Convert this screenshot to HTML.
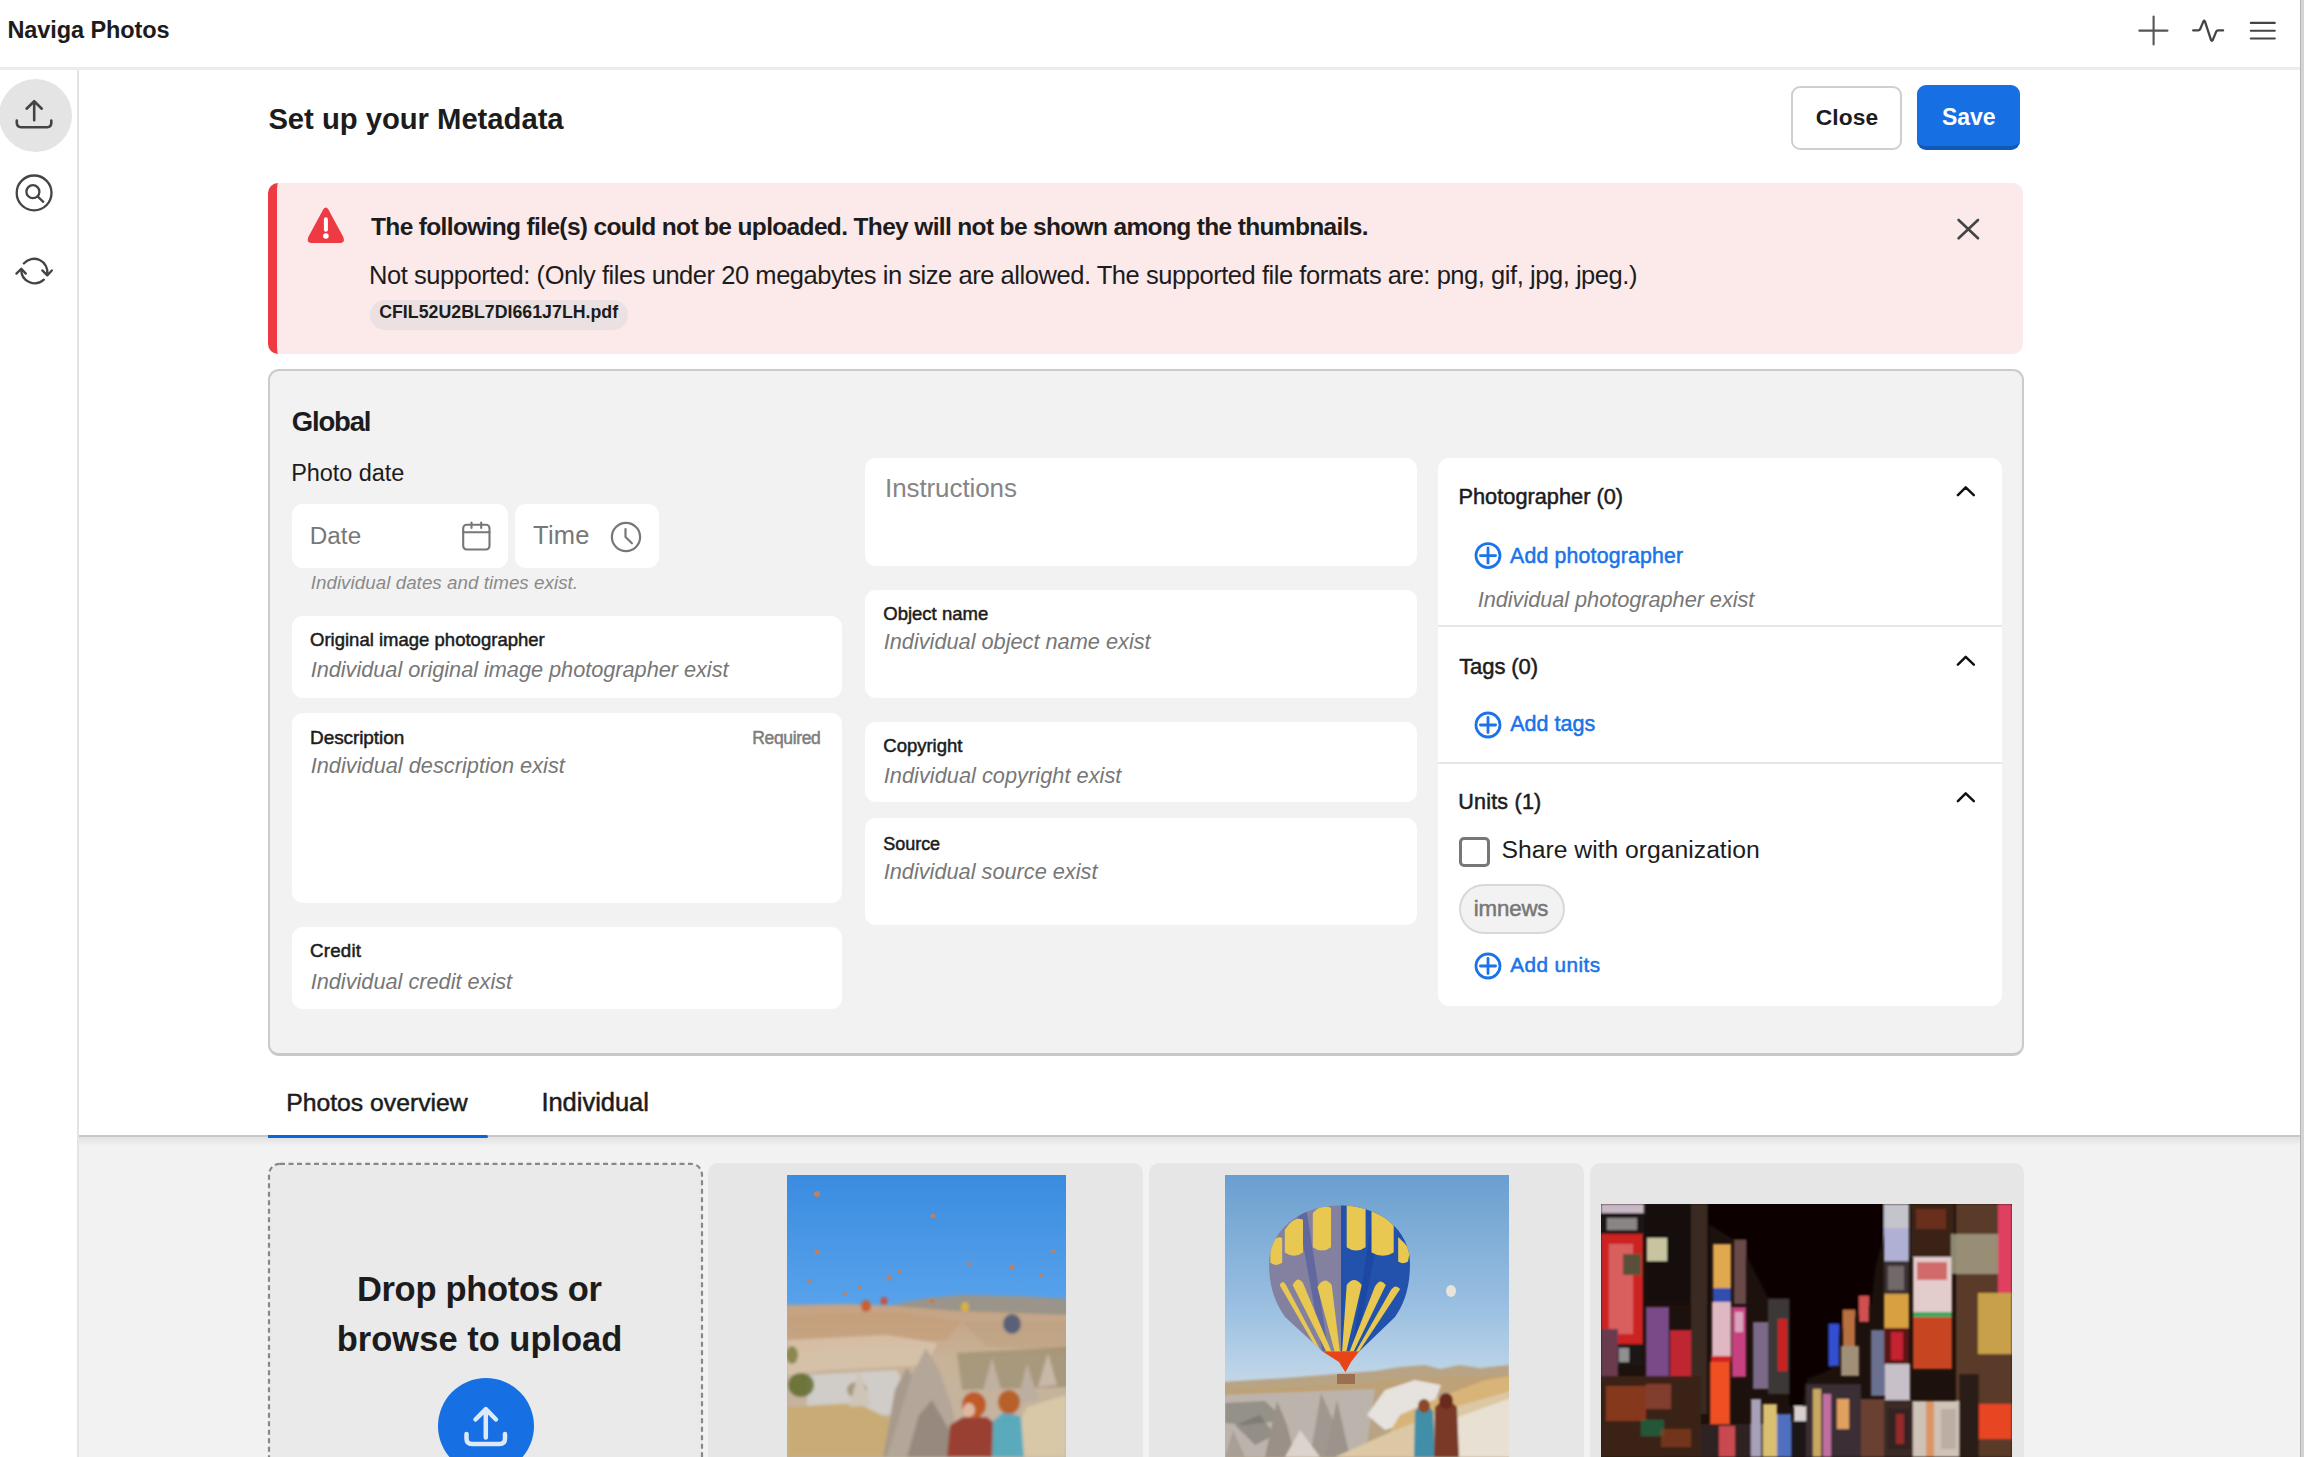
<!DOCTYPE html>
<html><head><meta charset="utf-8">
<style>
*{box-sizing:border-box;margin:0;padding:0}
html,body{width:2304px;height:1457px;overflow:hidden;background:#fff;font-family:"Liberation Sans",sans-serif;color:#1c1c1c}
.a{position:absolute}
.t{position:absolute;white-space:nowrap;line-height:1}
.box{position:absolute;background:#fff;border-radius:11px}
svg{position:absolute;overflow:visible}
</style></head><body>

<!-- header -->
<div class="t" style="left:7.4px;top:19.4px;font-size:23.5px;letter-spacing:-0.08px;font-weight:700;font-style:normal;color:#1c1c1c">Naviga Photos</div>
<div class="a" style="left:0;top:67px;width:2300px;height:3px;background:#ececec"></div>
<div class="a" style="left:2300px;top:0;width:4px;height:1457px;background:#d4d4d4;border-left:1px solid #b4b4b4"></div>

<!-- sidebar -->
<div class="a" style="left:77px;top:70px;width:2px;height:1387px;background:#e4e4e4"></div>
<div class="a" style="left:-1px;top:79px;width:73px;height:73px;border-radius:50%;background:#e4e4e4"></div>

<!-- title & buttons -->
<div class="t" style="left:268.4px;top:105.3px;font-size:29.25px;letter-spacing:-0.03px;font-weight:700;font-style:normal;color:#1c1c1c">Set up your Metadata</div>
<div class="a" style="left:1791px;top:86px;width:111px;height:64px;border:2px solid #cfcfcf;border-radius:9px;background:#fff"></div>
<div class="t" style="left:1815.7px;top:105.8px;font-size:22.75px;letter-spacing:0.15px;font-weight:700;font-style:normal;color:#1c1c1c">Close</div>
<div class="a" style="left:1917px;top:85px;width:103px;height:65px;border-radius:9px;background:#1670e4;border-bottom:4px solid #1158b8"></div>
<div class="t" style="left:1942.0px;top:105.6px;font-size:23.0px;letter-spacing:-0.07px;font-weight:700;font-style:normal;color:#fff">Save</div>

<!-- alert -->
<div class="a" style="left:268px;top:183px;width:1755px;height:171px;background:#fce9ea;border-radius:10px;border-left:9px solid #ee3a43"></div>
<div class="t" style="left:371.0px;top:215.1px;font-size:24.5px;letter-spacing:-0.65px;font-weight:700;font-style:normal;color:#1c1c1c">The following file(s) could not be uploaded. They will not be shown among the thumbnails.</div>
<div class="t" style="left:369.0px;top:262.5px;font-size:25.5px;letter-spacing:-0.45px;font-weight:400;font-style:normal;color:#1c1c1c">Not supported: (Only files under 20 megabytes in size are allowed. The supported file formats are: png, gif, jpg, jpeg.)</div>
<div class="a" style="left:370px;top:300px;width:258px;height:30px;border-radius:15px;background:#ebe1e2"></div>
<div class="t" style="left:379.2px;top:304.1px;font-size:17.75px;letter-spacing:0.01px;font-weight:700;font-style:normal;color:#1c1c1c">CFIL52U2BL7DI661J7LH.pdf</div>

<!-- global panel -->
<div class="a" style="left:268px;top:369px;width:1756px;height:687px;background:#f2f2f2;border:2px solid #cbcbcb;border-bottom:3.5px solid #c8c8c8;border-radius:11px"></div>
<div class="t" style="left:291.7px;top:408.0px;font-size:27.5px;letter-spacing:-1.16px;font-weight:700;font-style:normal;color:#1c1c1c">Global</div>
<div class="t" style="left:291.2px;top:462.2px;font-size:23.5px;letter-spacing:-0.07px;font-weight:400;font-style:normal;color:#1c1c1c">Photo date</div>

<div class="box" style="left:292px;top:504px;width:216px;height:64px"></div>
<div class="t" style="left:309.7px;top:523.5px;font-size:24.25px;letter-spacing:0.07px;font-weight:400;font-style:normal;color:#777">Date</div>
<div class="box" style="left:515px;top:504px;width:144px;height:64px"></div>
<div class="t" style="left:533.0px;top:522.5px;font-size:25.5px;letter-spacing:0.27px;font-weight:400;font-style:normal;color:#777">Time</div>
<div class="t" style="left:310.7px;top:574.4px;font-size:18.75px;letter-spacing:0.05px;font-weight:400;font-style:italic;color:#8a8a8a">Individual dates and times exist.</div>

<div class="box" style="left:292px;top:616px;width:550px;height:82px"></div>
<div class="t" style="left:310.0px;top:631.0px;font-size:18.5px;letter-spacing:0.01px;font-weight:400;-webkit-text-stroke:0.5px #1c1c1c;font-style:normal;color:#1c1c1c">Original image photographer</div>
<div class="t" style="left:310.7px;top:659.1px;font-size:21.75px;letter-spacing:-0.04px;font-weight:400;font-style:italic;color:#777">Individual original image photographer exist</div>

<div class="box" style="left:292px;top:713px;width:550px;height:190px"></div>
<div class="t" style="left:310.0px;top:728.2px;font-size:19.0px;letter-spacing:-0.08px;font-weight:400;-webkit-text-stroke:0.5px #1c1c1c;font-style:normal;color:#1c1c1c">Description</div>
<div class="t" style="left:752.3px;top:729.5px;font-size:17.5px;letter-spacing:-0.37px;font-weight:400;-webkit-text-stroke:0.5px #7d7d7d;font-style:normal;color:#7d7d7d">Required</div>
<div class="t" style="left:310.7px;top:754.8px;font-size:21.75px;letter-spacing:0.01px;font-weight:400;font-style:italic;color:#777">Individual description exist</div>

<div class="box" style="left:292px;top:927px;width:550px;height:82px"></div>
<div class="t" style="left:310.0px;top:942.0px;font-size:18.75px;letter-spacing:0.2px;font-weight:400;-webkit-text-stroke:0.5px #1c1c1c;font-style:normal;color:#1c1c1c">Credit</div>
<div class="t" style="left:310.7px;top:971.4px;font-size:21.75px;letter-spacing:-0.02px;font-weight:400;font-style:italic;color:#777">Individual credit exist</div>

<div class="box" style="left:865px;top:458px;width:552px;height:108px"></div>
<div class="t" style="left:885.0px;top:474.6px;font-size:26.0px;letter-spacing:-0.09px;font-weight:400;font-style:normal;color:#858585">Instructions</div>

<div class="box" style="left:865px;top:590px;width:552px;height:108px"></div>
<div class="t" style="left:883.3px;top:605.4px;font-size:18.5px;letter-spacing:0.0px;font-weight:400;-webkit-text-stroke:0.5px #1c1c1c;font-style:normal;color:#1c1c1c">Object name</div>
<div class="t" style="left:883.7px;top:631.0px;font-size:21.75px;letter-spacing:-0.01px;font-weight:400;font-style:italic;color:#777">Individual object name exist</div>

<div class="box" style="left:865px;top:722px;width:552px;height:80px"></div>
<div class="t" style="left:883.3px;top:736.8px;font-size:18.5px;letter-spacing:-0.02px;font-weight:400;-webkit-text-stroke:0.5px #1c1c1c;font-style:normal;color:#1c1c1c">Copyright</div>
<div class="t" style="left:883.7px;top:764.9px;font-size:21.75px;letter-spacing:0.03px;font-weight:400;font-style:italic;color:#777">Individual copyright exist</div>

<div class="box" style="left:865px;top:818px;width:552px;height:107px"></div>
<div class="t" style="left:883.3px;top:835.0px;font-size:18.0px;letter-spacing:-0.04px;font-weight:400;-webkit-text-stroke:0.5px #1c1c1c;font-style:normal;color:#1c1c1c">Source</div>
<div class="t" style="left:883.7px;top:861.0px;font-size:21.75px;letter-spacing:-0.01px;font-weight:400;font-style:italic;color:#777">Individual source exist</div>

<!-- right panel -->
<div class="box" style="left:1438px;top:458px;width:564px;height:548px"></div>
<div class="a" style="left:1438px;top:625px;width:564px;height:2px;background:#e6e6e6"></div>
<div class="a" style="left:1438px;top:762px;width:564px;height:2px;background:#e6e6e6"></div>

<div class="t" style="left:1458.5px;top:486.3px;font-size:21.75px;letter-spacing:0.01px;font-weight:400;-webkit-text-stroke:0.5px #1c1c1c;font-style:normal;color:#1c1c1c">Photographer (0)</div>
<div class="t" style="left:1510.1px;top:545.7px;font-size:21.25px;letter-spacing:0.19px;font-weight:400;-webkit-text-stroke:0.5px #1a73e8;font-style:normal;color:#1a73e8">Add photographer</div>
<div class="t" style="left:1477.7px;top:588.6px;font-size:21.75px;letter-spacing:-0.05px;font-weight:400;font-style:italic;color:#777">Individual photographer exist</div>

<div class="t" style="left:1459.2px;top:655.8px;font-size:22.0px;letter-spacing:-0.09px;font-weight:400;-webkit-text-stroke:0.5px #1c1c1c;font-style:normal;color:#1c1c1c">Tags (0)</div>
<div class="t" style="left:1510.2px;top:713.6px;font-size:21.5px;letter-spacing:0.03px;font-weight:400;-webkit-text-stroke:0.5px #1a73e8;font-style:normal;color:#1a73e8">Add tags</div>

<div class="t" style="left:1458.2px;top:792.4px;font-size:21.5px;letter-spacing:0.23px;font-weight:400;-webkit-text-stroke:0.5px #1c1c1c;font-style:normal;color:#1c1c1c">Units (1)</div>
<div class="a" style="left:1459px;top:837px;width:31px;height:30px;border:3px solid #777;border-radius:5px"></div>
<div class="t" style="left:1501.5px;top:837.7px;font-size:24.75px;letter-spacing:-0.02px;font-weight:400;font-style:normal;color:#1c1c1c">Share with organization</div>
<div class="a" style="left:1459px;top:884px;width:106px;height:50px;border-radius:25px;background:#f2f2f2;border:2px solid #d8d8d8"></div>
<div class="t" style="left:1473.8px;top:897.9px;font-size:22.25px;letter-spacing:-0.16px;font-weight:400;-webkit-text-stroke:0.5px #777;font-style:normal;color:#777">imnews</div>
<div class="t" style="left:1510.2px;top:955.3px;font-size:20.75px;letter-spacing:0.42px;font-weight:400;-webkit-text-stroke:0.5px #1a73e8;font-style:normal;color:#1a73e8">Add units</div>

<!-- tabs -->
<div class="t" style="left:286.2px;top:1090.9px;font-size:24.75px;letter-spacing:-0.01px;font-weight:400;-webkit-text-stroke:0.5px #1c1c1c;font-style:normal;color:#1c1c1c">Photos overview</div>
<div class="t" style="left:541.4px;top:1090.3px;font-size:25.5px;letter-spacing:-0.02px;font-weight:400;-webkit-text-stroke:0.5px #1c1c1c;font-style:normal;color:#1c1c1c">Individual</div>
<div class="a" style="left:79px;top:1135px;width:2221px;height:322px;background:#f2f2f2;border-top:2px solid #c8c8c8"></div>
<div class="a" style="left:79px;top:1137px;width:2221px;height:9px;background:linear-gradient(rgba(0,0,0,0.07),rgba(0,0,0,0))"></div>
<div class="a" style="left:268px;top:1135px;width:220px;height:2.5px;background:#0a66e0;border-radius:0 2px 2px 0"></div>

<!-- drop zone -->
<svg style="left:0;top:0" width="2304" height="1457" viewBox="0 0 2304 1457"><rect x="269" y="1163.8" width="433" height="340" rx="11" fill="#eaeaea" stroke="#888" stroke-width="2.2" stroke-dasharray="5 3.5"/></svg>
<div class="t" style="left:356.9px;top:1272.1px;font-size:34.5px;letter-spacing:-0.31px;font-weight:700;font-style:normal;color:#1c1c1c">Drop photos or</div>
<div class="t" style="left:336.8px;top:1321.8px;font-size:34.5px;letter-spacing:-0.0px;font-weight:700;font-style:normal;color:#1c1c1c">browse to upload</div>
<div class="a" style="left:438px;top:1378px;width:96px;height:96px;border-radius:50%;background:#1670e4"></div>

<!-- cards -->
<div class="a" style="left:708px;top:1163px;width:435px;height:320px;background:#e6e6e6;border-radius:10px"></div>
<div class="a" style="left:1149px;top:1163px;width:435px;height:320px;background:#e6e6e6;border-radius:10px"></div>
<div class="a" style="left:1590px;top:1163px;width:434px;height:320px;background:#e6e6e6;border-radius:10px"></div>

<div class="a" style="left:787px;top:1175px;width:279px;height:282px;overflow:hidden"><svg style="left:0;top:0" width="279" height="282" viewBox="0 0 279 282">
<defs>
<linearGradient id="s1" x1="0" y1="0" x2="0" y2="1"><stop offset="0" stop-color="#3a8ce0"/><stop offset="0.5" stop-color="#5ba4ec"/><stop offset="0.85" stop-color="#92bcec"/><stop offset="1" stop-color="#b0ccec"/></linearGradient>
<linearGradient id="t1" x1="0" y1="0" x2="0" y2="1"><stop offset="0" stop-color="#c4a282"/><stop offset="0.35" stop-color="#c8b298"/><stop offset="1" stop-color="#c0b4a4"/></linearGradient>
<filter id="bl1"><feGaussianBlur stdDeviation="1.4"/></filter>
</defs>
<rect width="279" height="282" fill="url(#s1)"/>
<g filter="url(#bl1)">
<path d="M95 132 L140 123 L175 120 L230 121 L284 124 L284 150 L95 140Z" fill="#9a948a"/>
<path d="M-5 130 L60 129 L110 131 L170 136 L284 140 L284 290 L-5 290Z" fill="url(#t1)"/>
<path d="M0 140 L110 137 L175 146 L160 165 L60 172 L0 178Z" fill="#c49a74" opacity="0.55"/>
<path d="M0 165 L100 160 L150 168 L140 190 L40 195 L0 200Z" fill="#d8c4ac" opacity="0.8"/>
<path d="M175 146 L284 146 L284 175 L200 172Z" fill="#bca080" opacity="0.6"/>
<path d="M170 178 L284 172 L284 212 L175 215Z" fill="#6e6a48" opacity="0.35"/>
<path d="M20 200 L110 195 L130 240 L20 240Z" fill="#d0ccc8"/>
<ellipse cx="14" cy="210" rx="13" ry="12" fill="#5e6a2a" opacity="0.85"/>
<ellipse cx="5" cy="180" rx="6" ry="9" fill="#6a7028" opacity="0.7"/>
<ellipse cx="70" cy="215" rx="10" ry="8" fill="#8a7a50" opacity="0.6"/>
<path d="M0 232 L70 228 L115 250 L125 282 L0 282Z" fill="#c9ac74"/>
<path d="M62 232 L72 196 L84 230Z" fill="#cfc4b8"/>
<path d="M96 282 L108 215 L120 192 L132 212 L150 282Z" fill="#a89a8c"/>
<path d="M100 282 L125 200 L139 173 L152 195 L166 235 L172 282Z" fill="#b4a698"/>
<path d="M120 282 L132 240 L145 225 L165 260 L168 282Z" fill="#8a7e74" opacity="0.7"/>
<path d="M196 216 L205 183 L214 214Z" fill="#c0b0a0"/>
<path d="M230 228 L240 188 L252 226Z" fill="#bcaea0"/>
<path d="M251 212 L261 178 L270 210Z" fill="#c8b8a8"/>
<path d="M214 282 L240 232 L279 220 L279 282Z" fill="#d8c8a8"/>
<path d="M160 282 L163 250 L176 242 L200 242 L212 252 L214 282Z" fill="#9a4030"/>
<ellipse cx="187" cy="230" rx="12" ry="13" fill="#c05a28"/>
<ellipse cx="182" cy="235" rx="6" ry="7" fill="#e0b8a0"/>
<path d="M205 282 L206 246 L218 236 L234 242 L237 282Z" fill="#5aaabb"/>
<ellipse cx="222" cy="227" rx="11" ry="12" fill="#b8602a"/>
<ellipse cx="225" cy="149" rx="9" ry="10" fill="#5a6078"/>
<ellipse cx="79" cy="131" rx="5" ry="6" fill="#c86030"/>
<ellipse cx="97" cy="126" rx="3.5" ry="4" fill="#c85040"/>
<ellipse cx="178" cy="132" rx="4" ry="5" fill="#d8b040"/>
</g>
<g fill="#c08060">
<circle cx="30" cy="19" r="3"/><circle cx="146" cy="41" r="2.5"/><circle cx="30" cy="77" r="2.5"/><circle cx="22" cy="106" r="2"/><circle cx="102" cy="103" r="2.5"/><circle cx="112" cy="97" r="2"/><circle cx="182" cy="89" r="2"/><circle cx="225" cy="92" r="2.5"/><circle cx="254" cy="100" r="2"/><circle cx="266" cy="76" r="2"/><circle cx="58" cy="119" r="2"/><circle cx="73" cy="112" r="2"/><circle cx="145" cy="126" r="2.5"/>
</g>
</svg>
</div>
<div class="a" style="left:1225px;top:1175px;width:284px;height:282px;overflow:hidden"><svg style="left:0;top:0" width="284" height="282" viewBox="0 0 284 282">
<defs>
<linearGradient id="s2" x1="0" y1="0" x2="0" y2="1"><stop offset="0" stop-color="#6a9fd0"/><stop offset="0.45" stop-color="#98bee0"/><stop offset="0.72" stop-color="#c0d6e8"/><stop offset="1" stop-color="#d8e0e4"/></linearGradient>
<clipPath id="env"><path d="M115.2 30.4C155 30.4 185 55 185 89C185 115 178 130 170 142L134.1 176.5L97.6 176.5L60 142C52 130 44.1 115 44.1 89C44.1 55 75 30.4 115.2 30.4Z"/></clipPath>
<filter id="bl2"><feGaussianBlur stdDeviation="1.3"/></filter>
</defs>
<rect width="284" height="282" fill="url(#s2)"/>
<g filter="url(#bl2)">
<path d="M-5 207 L60 203 L110 199 L150 196 L175 192 L200 190 L215 194 L235 190 L255 193 L284 190 L289 290 L-5 290Z" fill="#b8a484"/>
<path d="M-5 215 L140 208 L170 204 L289 200 L289 215 L-5 222Z" fill="#c0a070" opacity="0.7"/>
<path d="M-5 220 L150 214 L140 282 L-5 282Z" fill="#bcb4ac"/>
<path d="M0 228 L40 226 L60 245 L20 250 L0 248Z" fill="#7a7a70" opacity="0.6"/>
<path d="M10 250 L35 240 L50 260 L30 270Z" fill="#6a6a60" opacity="0.5"/>
<path d="M40 282 L52 226 L62 250 L70 282Z" fill="#9a9088"/>
<path d="M85 282 L96 218 L108 245 L115 282Z" fill="#a09890"/>
<path d="M100 282 L112 225 L125 282Z" fill="#9c948c"/>
<path d="M0 282 L8 255 L20 282Z" fill="#a8a098"/>
<path d="M60 282 L75 255 L95 282Z" fill="#dcd4cc"/>
<path d="M142 240 L160 215 L190 205 L216 210 L205 240 L160 255Z" fill="#e6e2de"/>
<path d="M150 282 L175 240 L215 222 L260 205 L289 200 L289 282Z" fill="#d8b478"/>
<path d="M110 282 L170 255 L230 232 L289 215 L289 282Z" fill="#dcc8a4"/>
<path d="M205 282 L225 245 L289 222 L289 282Z" fill="#e8e0d2"/>
<path d="M189 282 L190 236 L199 227 L208 236 L210 282Z" fill="#3f8ea8"/>
<path d="M209 282 L210 232 L221 222 L232 232 L234 282Z" fill="#7a3828"/>
<ellipse cx="199" cy="231" rx="6" ry="7" fill="#8a4a2a"/>
<ellipse cx="221" cy="226" rx="7" ry="8" fill="#6a2a1a"/>
</g>
<g clip-path="url(#env)">
<rect x="40" y="25" width="80" height="160" fill="#8480a0"/>
<rect x="116" y="25" width="75" height="160" fill="#2352ac"/>
<path d="M70 25 L80 25 L104 180 L98 180Z" fill="#4a58a0" opacity="0.6"/>
<path d="M150 25 L160 25 L130 180 L126 180Z" fill="#1a44a0" opacity="0.7"/>
<path d="M45.4 87.8 L45.4 70 Q51 60 57.2 63 L57.2 87.8 Q51 92 45.4 87.8Z" fill="#e8c850"/>
<path d="M59.8 77.4 L59.8 55 Q69 40 78 44.8 L78 77.4 Q69 84 59.8 77.4Z" fill="#e8c850"/>
<path d="M87.8 72.2 L87.8 38 Q97 28 106 33 L106 72.2 Q97 79 87.8 72.2Z" fill="#e8c850"/>
<path d="M121.7 72.2 L121.7 30 L140.6 30 L140.6 72.2 Q131 79 121.7 72.2Z" fill="#e8c850"/>
<path d="M146.5 77.4 L146.5 35 Q158 38 168.7 50 L168.7 77.4 Q158 84 146.5 77.4Z" fill="#e8c850"/>
<path d="M173.2 86.5 L173.2 62 Q180 68 185 75 L183 86.5 Q178 90 173.2 86.5Z" fill="#e8c850"/>
<path d="M54.6 110 Q58 104 61 110 L97 178 L94 178Z" fill="#e8c850"/>
<path d="M67.6 110 Q73 100 78 108 L107 178 L102 178Z" fill="#e8c850"/>
<path d="M92.4 112 Q99.5 100 106.7 110 L115 178 L110 178Z" fill="#e8c850"/>
<path d="M121.7 110 Q129 100 136.7 110 L121 178 L117 178Z" fill="#e8c850"/>
<path d="M149.7 112 Q155 102 160.8 110 L128 178 L124 178Z" fill="#e8c850"/>
<path d="M165.4 116 Q170 108 175.2 114 L133 178 L130 178Z" fill="#e8c850"/>
</g>
<path d="M97.6 176.5L134.1 176.5L126 187L120.4 197.3L114 187Z" fill="#e84418"/>
<rect x="112" y="199" width="18" height="10" fill="#9a7050"/>
<ellipse cx="226" cy="116" rx="5" ry="6" fill="#e8e4dc"/>
</svg>
</div>
<div class="a" style="left:1601px;top:1204px;width:411px;height:253px;overflow:hidden"><svg style="left:0;top:0" width="411" height="253" viewBox="0 0 411 253">
<defs><filter id="bl3"><feGaussianBlur stdDeviation="1"/></filter></defs>
<rect width="411" height="253" fill="#1c110d"/>
<g filter="url(#bl3)">
<path d="M108 -2 L283 -2 L283 30 L275 60 L270 100 L258 110 L240 125 L230 165 L206 175 L200 210 L188 200 L188 95 L168 95 L150 60 L140 40 L108 20Z" fill="#070505"/>
<rect x="0" y="0" width="43" height="9" fill="#c8b8c4"/>
<rect x="0" y="9" width="43" height="21" fill="#1a1414"/>
<rect x="6" y="14" width="30" height="12" fill="#8a8484"/>
<rect x="0" y="30" width="42" height="110" fill="#cc2424"/>
<rect x="8" y="40" width="24" height="90" fill="#e8a8a8" opacity="0.45"/>
<rect x="0" y="140" width="42" height="22" fill="#1e1818"/>
<rect x="18" y="144" width="10" height="14" fill="#909090"/>
<rect x="0" y="125" width="17" height="60" fill="#6a3a50"/>
<rect x="45" y="0" width="63" height="100" fill="#140c0a"/>
<rect x="90" y="0" width="16" height="210" fill="#3a2a24"/>
<rect x="46" y="34" width="20" height="23" fill="#c8c4a0"/>
<rect x="22" y="50" width="18" height="21" fill="#5a5038"/>
<rect x="45" y="103" width="23" height="69" fill="#7a4a88"/>
<rect x="69" y="126" width="21" height="49" fill="#c02830"/>
<rect x="0" y="172" width="100" height="81" fill="#3a2018"/>
<rect x="5" y="182" width="40" height="35" fill="#9a4020" opacity="0.8"/>
<rect x="45" y="180" width="25" height="25" fill="#a04838" opacity="0.7"/>
<rect x="40" y="216" width="23" height="16" fill="#205838"/>
<rect x="60" y="225" width="30" height="18" fill="#8a4020" opacity="0.7"/>
<rect x="112" y="40" width="18" height="44" fill="#e0a850"/>
<rect x="112" y="84" width="18" height="14" fill="#3050b0"/>
<rect x="111" y="98" width="19" height="54" fill="#e0b8c4"/>
<rect x="110" y="152" width="20" height="6" fill="#d02020"/>
<rect x="109" y="158" width="20" height="62" fill="#f05020"/>
<rect x="133" y="36" width="12" height="64" fill="#6a4848"/>
<rect x="131" y="103" width="14" height="70" fill="#c84080"/>
<rect x="134" y="108" width="8" height="20" fill="#e0d0d8" opacity="0.7"/>
<rect x="152" y="118" width="16" height="67" fill="#7a6a88"/>
<rect x="167" y="95" width="21" height="95" fill="#3e3838"/>
<rect x="177" y="115" width="9" height="52" fill="#c82020"/>
<rect x="100" y="220" width="90" height="33" fill="#2e2024"/>
<rect x="118" y="222" width="16" height="31" fill="#c84850"/>
<rect x="150" y="195" width="10" height="58" fill="#a8a0b8"/>
<rect x="162" y="200" width="14" height="53" fill="#d8c070"/>
<rect x="176" y="210" width="14" height="43" fill="#5070c0"/>
<rect x="193" y="202" width="12" height="15" fill="#d8d0d0"/>
<rect x="190" y="217" width="18" height="36" fill="#1a1418"/>
<rect x="205" y="180" width="55" height="73" fill="#3a2e34"/>
<rect x="212" y="185" width="8" height="68" fill="#c8a860"/>
<rect x="222" y="190" width="8" height="63" fill="#c070a0"/>
<rect x="236" y="195" width="12" height="30" fill="#e0a060"/>
<rect x="228" y="120" width="10" height="42" fill="#3050d0"/>
<rect x="242" y="106" width="12" height="36" fill="#b87040"/>
<rect x="240" y="142" width="18" height="30" fill="#a09078"/>
<rect x="258" y="92" width="10" height="26" fill="#d05050"/>
<rect x="270" y="126" width="15" height="66" fill="#6a7090"/>
<rect x="260" y="195" width="25" height="58" fill="#6a4030"/>
<rect x="283" y="0" width="25" height="24" fill="#c4c4cc"/>
<rect x="283" y="24" width="25" height="33" fill="#b0b0d4"/>
<rect x="283" y="57" width="25" height="33" fill="#383030"/>
<rect x="287" y="62" width="16" height="24" fill="#8a8080" opacity="0.7"/>
<rect x="283" y="90" width="25" height="34" fill="#d8a040"/>
<rect x="283" y="124" width="25" height="36" fill="#5a1414"/>
<rect x="290" y="128" width="12" height="28" fill="#e02838" opacity="0.8"/>
<rect x="284" y="160" width="25" height="36" fill="#c8c0c8"/>
<rect x="283" y="196" width="29" height="57" fill="#3a2a26"/>
<rect x="287" y="205" width="22" height="40" fill="#302020"/>
<rect x="295" y="210" width="8" height="30" fill="#c03030" opacity="0.7"/>
<rect x="310" y="0" width="43" height="53" fill="#3a2018"/>
<rect x="315" y="5" width="30" height="20" fill="#8a3a20" opacity="0.6"/>
<rect x="312" y="53" width="39" height="55" fill="#e2cccc"/>
<rect x="316" y="58" width="30" height="18" fill="#c83838" opacity="0.65"/>
<rect x="312" y="108" width="39" height="5" fill="#3aa860"/>
<rect x="312" y="113" width="39" height="52" fill="#c84424"/>
<rect x="355" y="0" width="56" height="253" fill="#5a3a2c"/>
<rect x="350" y="30" width="50" height="40" fill="#a8a488" opacity="0.8"/>
<rect x="397" y="0" width="14" height="89" fill="#e04060"/>
<rect x="377" y="89" width="34" height="61" fill="#c8a048"/>
<rect x="373" y="200" width="38" height="35" fill="#e84424"/>
<rect x="312" y="197" width="46" height="56" fill="#cfc2b6"/>
<rect x="325" y="197" width="8" height="56" fill="#e08040" opacity="0.7"/>
<rect x="340" y="205" width="15" height="40" fill="#b0a098" opacity="0.6"/>
<rect x="358" y="170" width="20" height="83" fill="#2a1a14"/>
</g>
</svg>
</div>

<svg style="left:0;top:0" width="2304" height="1457" viewBox="0 0 2304 1457">
<g fill="none" stroke-linecap="round" stroke-linejoin="round">
<path d="M2153.6 16.6V44.5M2139.3 30.6H2167.5" stroke="#555" stroke-width="2.1"/>
<path d="M2193.2 30.4H2198.2Q2199.6 30.4 2200.2 29.1L2203.4 21.4Q2204.3 19.6 2205 21.6L2211 39.8Q2211.9 42 2212.8 39.9L2216.2 31.6Q2216.8 30.4 2218.2 30.4H2223.1" stroke="#444" stroke-width="2.3"/>
<path d="M2250.8 22.9H2274.8M2250.8 30.8H2274.8M2250.8 38.5H2274.8" stroke="#444" stroke-width="2.1"/>
<path d="M34.2 101.5V120.3M26.6 108.7L34.2 101.2L41.8 108.7M16.8 120.5V122.8Q16.8 127.2 21.2 127.2H47.2Q51.3 127.2 51.3 122.8V120.5" stroke="#444" stroke-width="2.6"/>
<circle cx="34.1" cy="192.9" r="17.4" stroke="#444" stroke-width="2.3"/>
<circle cx="32.9" cy="191.7" r="6.5" stroke="#444" stroke-width="2.3"/>
<path d="M37.8 196.6L43.3 201.8" stroke="#444" stroke-width="2.3"/>
<path d="M23.8 263.4A13.5 13.5 0 0 1 47.3 274.4M42.3 270.4L47.3 275.4L51.8 270.4M43.9 279.7A13.5 13.5 0 0 1 21.3 269.2M16.4 273.6L21.3 268.7L25.8 273.6" stroke="#444" stroke-width="2.3"/>
<path d="M1958.6 220L1978 238.3M1978 220L1958.6 238.3" stroke="#444" stroke-width="2.6"/>
<rect x="463.2" y="524.8" width="26.3" height="24.7" rx="3.5" stroke="#777" stroke-width="2.1"/>
<path d="M463.2 532.3H489.5M471.5 522.5V528M481.2 522.5V528" stroke="#777" stroke-width="2.1"/>
<circle cx="626" cy="537" r="14.1" stroke="#777" stroke-width="2.2"/>
<path d="M625.5 529V537L631.9 543.3" stroke="#777" stroke-width="2.2"/>
<path d="M1957.9 495.1L1965.7 487.3L1973.8 495.1M1957.9 664.6L1965.7 656.8L1973.8 664.6M1957.9 801.1L1965.7 793.3L1973.8 801.1" stroke="#111" stroke-width="2.5"/>
<g stroke="#1a73e8" stroke-width="2.8">
<circle cx="1488" cy="555.6" r="12"/><path d="M1488 548V563.2M1480.4 555.6H1495.6"/>
<circle cx="1488" cy="725" r="12"/><path d="M1488 717.4V732.6M1480.4 725H1495.6"/>
<circle cx="1488" cy="966" r="12"/><path d="M1488 958.4V973.6M1480.4 966H1495.6"/>
</g>
<path d="M485.8 1409.5V1437.5M475.5 1419.5L485.8 1409.2L496 1419.5M466.5 1434V1438.5Q466.5 1444 472 1444H499.5Q505 1444 505 1438.5V1434" stroke="#dde8f8" stroke-width="4.5"/>
</g>
<path d="M323.2 209.5Q325.8 205.3 328.4 209.5L343.3 237Q345.3 242.9 340.3 242.9H311.3Q306.3 242.9 308.3 237Z" fill="#ee3a43"/>
<rect x="323.9" y="217.3" width="4" height="14.5" rx="2" fill="#fff"/>
<circle cx="325.9" cy="236" r="2.8" fill="#fff"/>
</svg>

<script>(function(){var w=window.innerWidth;if(w&&Math.abs(w-2304)>60){document.documentElement.style.zoom=(w/2304);}})();</script>
</body></html>
